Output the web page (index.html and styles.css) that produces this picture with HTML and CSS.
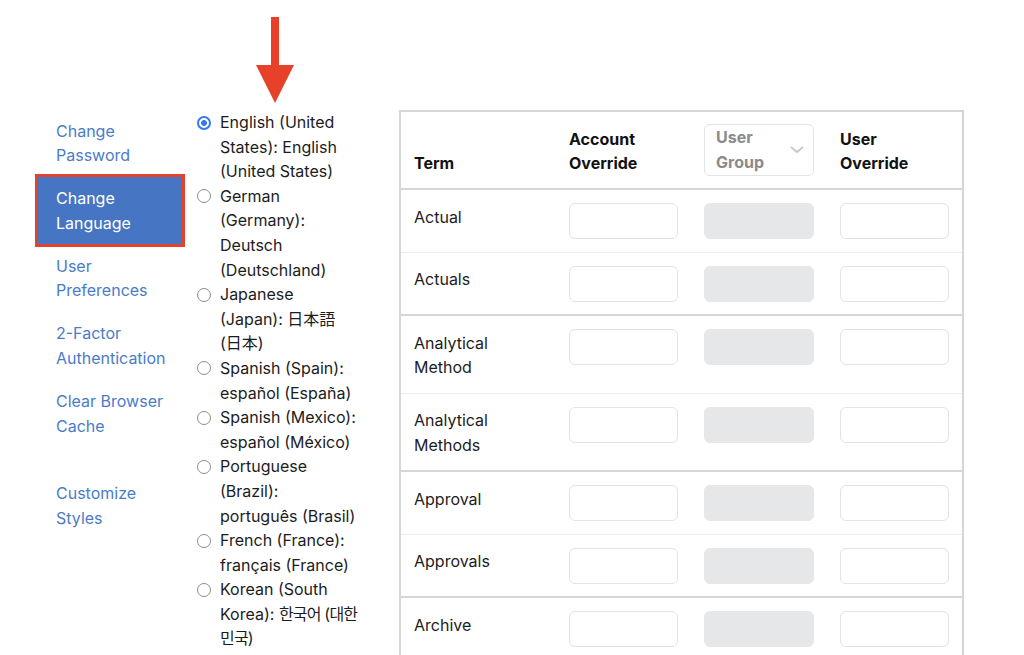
FILE: index.html
```html
<!DOCTYPE html>
<html lang="en">
<head>
    <meta charset="UTF-8">
    <meta name="viewport" content="width=device-width, initial-scale=1.0">
    <title>Change Language</title>
    <link rel="stylesheet" href="styles.css">
</head>
<body>
    <div class="page">
        <!-- annotation arrow pointing at the language list -->
        <svg class="pointer" width="40" height="90" viewBox="0 0 40 90">
            <rect x="15" y="0" width="8" height="50" fill="#e8412a"/>
            <polygon points="0,48 38,48 19,86" fill="#e8412a"/>
        </svg>

        <nav class="side-nav">
            <a class="nav-item" href="#">Change Password</a>
            <a class="nav-item active" href="#">Change Language</a>
            <a class="nav-item" href="#">User Preferences</a>
            <a class="nav-item" href="#">2-Factor Authentication</a>
            <a class="nav-item" href="#">Clear Browser Cache</a>
            <a class="nav-item spaced" href="#">Customize Styles</a>
        </nav>

        <form class="lang-list">
            <label class="lang-option"><input type="radio" name="lang" checked><span class="lang-name">English (United States): English (United States)</span></label>
            <label class="lang-option"><input type="radio" name="lang"><span class="lang-name">German (Germany): Deutsch (Deutschland)</span></label>
            <label class="lang-option"><input type="radio" name="lang"><span class="lang-name">Japanese (Japan): <span lang="ja">日本語 <span class="keep">(日本)</span></span></span></label>
            <label class="lang-option"><input type="radio" name="lang"><span class="lang-name">Spanish (Spain): español (España)</span></label>
            <label class="lang-option"><input type="radio" name="lang"><span class="lang-name">Spanish (Mexico): español (México)</span></label>
            <label class="lang-option"><input type="radio" name="lang"><span class="lang-name">Portuguese (Brazil): português (Brasil)</span></label>
            <label class="lang-option"><input type="radio" name="lang"><span class="lang-name">French (France): français (France)</span></label>
            <label class="lang-option"><input type="radio" name="lang"><span class="lang-name">Korean (South Korea): <span lang="ko" class="hangul">한국어 (대한민국)</span></span></label>
        </form>

        <table class="terms">
            <thead>
                <tr>
                    <th class="col-term">Term</th>
                    <th class="col-field">Account Override</th>
                    <th class="col-group">
                        <div class="group-select">
                            <span>User Group</span>
                            <svg width="14" height="8" viewBox="0 0 14 8"><path d="M1.5 1.5 L7 6 L12.5 1.5" fill="none" stroke="#c9c9c9" stroke-width="2" stroke-linecap="round" stroke-linejoin="round"/></svg>
                        </div>
                    </th>
                    <th class="col-field">User Override</th>
                </tr>
            </thead>
            <tbody>
                <tr><td>Actual</td><td><input type="text"></td><td><input type="text" disabled></td><td><input type="text"></td></tr>
                <tr><td>Actuals</td><td><input type="text"></td><td><input type="text" disabled></td><td><input type="text"></td></tr>
            </tbody>
            <tbody>
                <tr><td>Analytical Method</td><td><input type="text"></td><td><input type="text" disabled></td><td><input type="text"></td></tr>
                <tr><td>Analytical Methods</td><td><input type="text"></td><td><input type="text" disabled></td><td><input type="text"></td></tr>
            </tbody>
            <tbody>
                <tr><td>Approval</td><td><input type="text"></td><td><input type="text" disabled></td><td><input type="text"></td></tr>
                <tr><td>Approvals</td><td><input type="text"></td><td><input type="text" disabled></td><td><input type="text"></td></tr>
            </tbody>
            <tbody>
                <tr><td>Archive</td><td><input type="text"></td><td><input type="text" disabled></td><td><input type="text"></td></tr>
                <tr><td>Archives</td><td><input type="text"></td><td><input type="text" disabled></td><td><input type="text"></td></tr>
            </tbody>
        </table>
    </div>
</body>
</html>
```

FILE: styles.css
```css
html, body {
    margin: 0;
    height: 100%;
    overflow: hidden;
}
body {
    font-family: Inter, "Noto Sans CJK JP", "Noto Sans CJK KR", sans-serif;
    font-size: 16px;
    line-height: 24.6px;
    color: #1c1c1e;
    background-color: white;
}
.page {
    position: relative;
    display: flex;
    align-items: flex-start;
    padding: 109px 0 0 38px;
}
.pointer {
    position: absolute;
    left: 256px;
    top: 17px;
}

/* left menu */
.side-nav {
    width: 144px;
    flex-shrink: 0;
    display: flex;
    flex-direction: column;
}
.nav-item {
    display: block;
    padding: 9.6px 14px 8.8px 18px;
    color: #4a7cc7;
    text-decoration: none;
}
.nav-item.active {
    background-color: #4575c3;
    color: white;
    outline: 3px solid #e3422c;
}
.nav-item.spaced {
    margin-top: 24.5px;
}

/* language radios */
.lang-list {
    width: 168px;
    flex-shrink: 0;
    margin: 1px 0 0 15px;
}
.lang-option {
    display: flex;
    gap: 9px;
}
.lang-option input {
    appearance: none;
    flex-shrink: 0;
    width: 14px;
    height: 14px;
    margin: 5.5px 0 0 0;
    border: 1px solid #8d8d8d;
    border-radius: 50%;
    background: white;
}
.lang-option input:checked {
    border: 2px solid #3478f6;
    background: radial-gradient(circle, #3478f6 0 2.6px, white 3.2px);
}
.lang-name {
    width: 139px;
}
.keep {
    white-space: nowrap;
}
.hangul {
    letter-spacing: -0.8px;
}

/* overrides table */
.terms {
    margin: 1px 0 0 34px;
    flex-shrink: 0;
    width: 565px;
    table-layout: fixed;
    border: 2px solid #d6d6d6;
    border-collapse: separate;
    border-spacing: 0;
}
.terms th,
.terms td {
    box-sizing: border-box;
    padding: 13px 13px 12.5px;
    text-align: left;
    vertical-align: top;
}
.terms td:first-child {
    padding-top: 14.5px;
    padding-bottom: 13px;
}
.terms th {
    padding: 12px 13px 12px;
    vertical-align: bottom;
    font-weight: 700;
    color: #111;
}
.col-term {
    width: 155px;
}
.col-field {
    width: 135px;
}
.terms th.col-field {
    padding-right: 30px;
}
.col-group {
    width: 136px;
}
.terms td {
    border-top: 1px solid #ececec;
    font-weight: 400;
}
.terms tbody tr:first-child td {
    border-top: 2px solid #d6d6d6;
}
.terms input {
    display: block;
    box-sizing: border-box;
    width: 100%;
    height: 36px;
    margin: 0;
    border: 1px solid #e3e3e3;
    border-radius: 6px;
    background: white;
    font: inherit;
}
.terms input:disabled {
    background: #e6e7e9;
    border-color: #e6e7e9;
}
.group-select {
    display: flex;
    align-items: center;
    justify-content: space-between;
    box-sizing: border-box;
    height: 52px;
    padding: 0 9px 0 11px;
    border: 1px solid #e3e3e3;
    border-radius: 6px;
    color: #8a8a8c;
    font-weight: 700;
}
.group-select span {
    width: 50px;
}
```
